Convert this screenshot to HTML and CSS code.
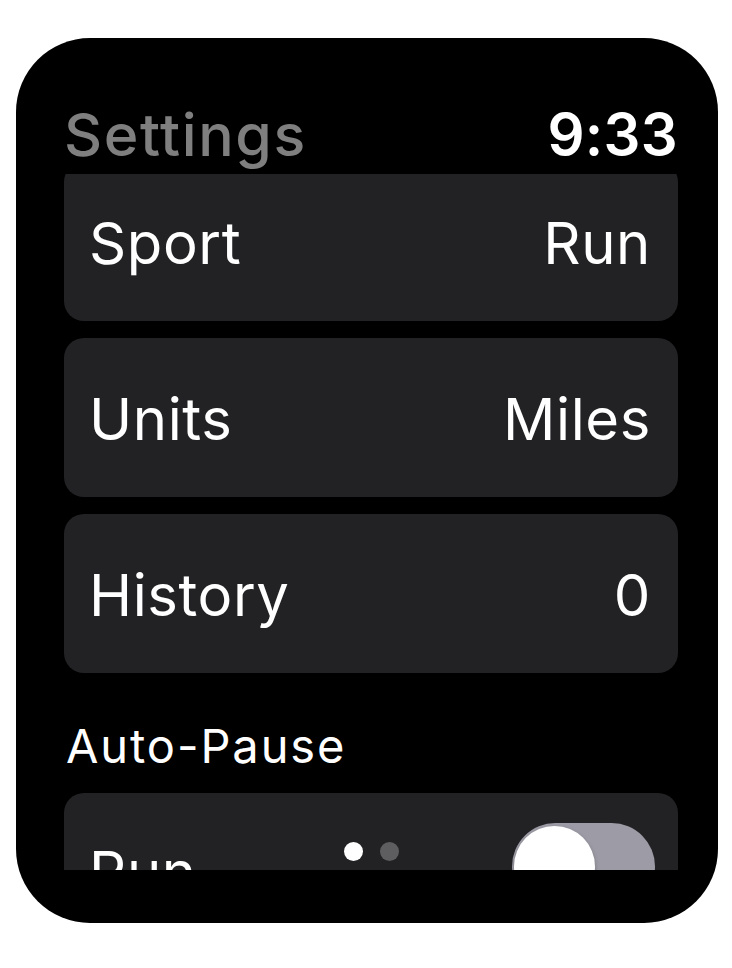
FILE: index.html
```html
<!DOCTYPE html>
<html lang="en">
<head>
<meta charset="utf-8">
<title>Settings</title>
<link rel="stylesheet" href="styles.css">
</head>
<body>
<div class="watch">
  <header class="header">
    <h1 class="title">Settings</h1>
    <span class="time">9:33</span>
  </header>
  <main class="viewport">
    <div class="list">
      <div class="row row-first"><span class="label">Sport</span><span class="value">Run</span></div>
      <div class="row"><span class="label">Units</span><span class="value">Miles</span></div>
      <div class="row"><span class="label">History</span><span class="value">0</span></div>
      <h2 class="section">Auto-Pause</h2>
      <div class="row row-toggle">
        <span class="label label-low">Run</span>
        <span class="toggle"><span class="knob"></span></span>
      </div>
    </div>
    <div class="dots"><span class="dot dot-on"></span><span class="dot"></span></div>
  </main>
</div>
</body>
</html>
```
FILE: styles.css
```css
* { box-sizing: border-box; }
html, body { margin: 0; padding: 0; background: #ffffff; }
body {
  font-family: Inter, "Noto Sans", "DejaVu Sans", sans-serif;
  color: #ffffff;
}
.watch {
  margin: 38px 0 0 16px;
  width: 702px;
  height: 885px;
  background: #000000;
  border-radius: 74px;
  padding: 67px 40px 0 48px;
  display: flex;
  flex-direction: column;
}
.header {
  display: flex;
  justify-content: space-between;
  align-items: flex-start;
  height: 69px;
}
.title {
  margin: 0;
  font-size: 59px;
  line-height: 59px;
  font-weight: 500;
  color: #7f7f7f;
  letter-spacing: 1.6px;
}
.time {
  font-size: 58px;
  line-height: 59px;
  font-weight: 600;
  color: #ffffff;
  letter-spacing: 0.3px;
}
.viewport {
  position: relative;
  height: 696px;
  overflow: hidden;
}
.list {
  display: flex;
  flex-direction: column;
  gap: 17px;
}
.row {
  height: 159px;
  flex-shrink: 0;
  background: #222225;
  border-radius: 20px;
  display: flex;
  justify-content: space-between;
  align-items: center;
  padding: 3px 27px 0 25px;
  font-size: 58px;
  line-height: 58px;
  letter-spacing: 0.6px;
}
.row-first { margin-top: -12px; }
.section {
  margin: 32px 0 7px 2px;
  font-size: 47px;
  line-height: 47px;
  font-weight: 400;
  color: #ffffff;
  letter-spacing: 1.9px;
}
.row-toggle {
  align-items: flex-start;
  padding: 30px 23px 0 25px;
}
.label-low { margin-top: 20px; }
.toggle {
  width: 143px;
  height: 87px;
  border-radius: 44px;
  background: #9d9ca6;
  padding: 3px 2px;
  display: flex;
}
.knob {
  width: 81px;
  height: 81px;
  border-radius: 50%;
  background: #ffffff;
  box-shadow: 0 2px 4px rgba(0,0,0,0.25);
}
.dots {
  position: absolute;
  left: 0;
  right: 0;
  bottom: 9px;
  display: flex;
  justify-content: center;
  gap: 17px;
}
.dot {
  width: 19px;
  height: 19px;
  border-radius: 50%;
  background: #5e5e60;
}
.dot-on { background: #ffffff; }
```
